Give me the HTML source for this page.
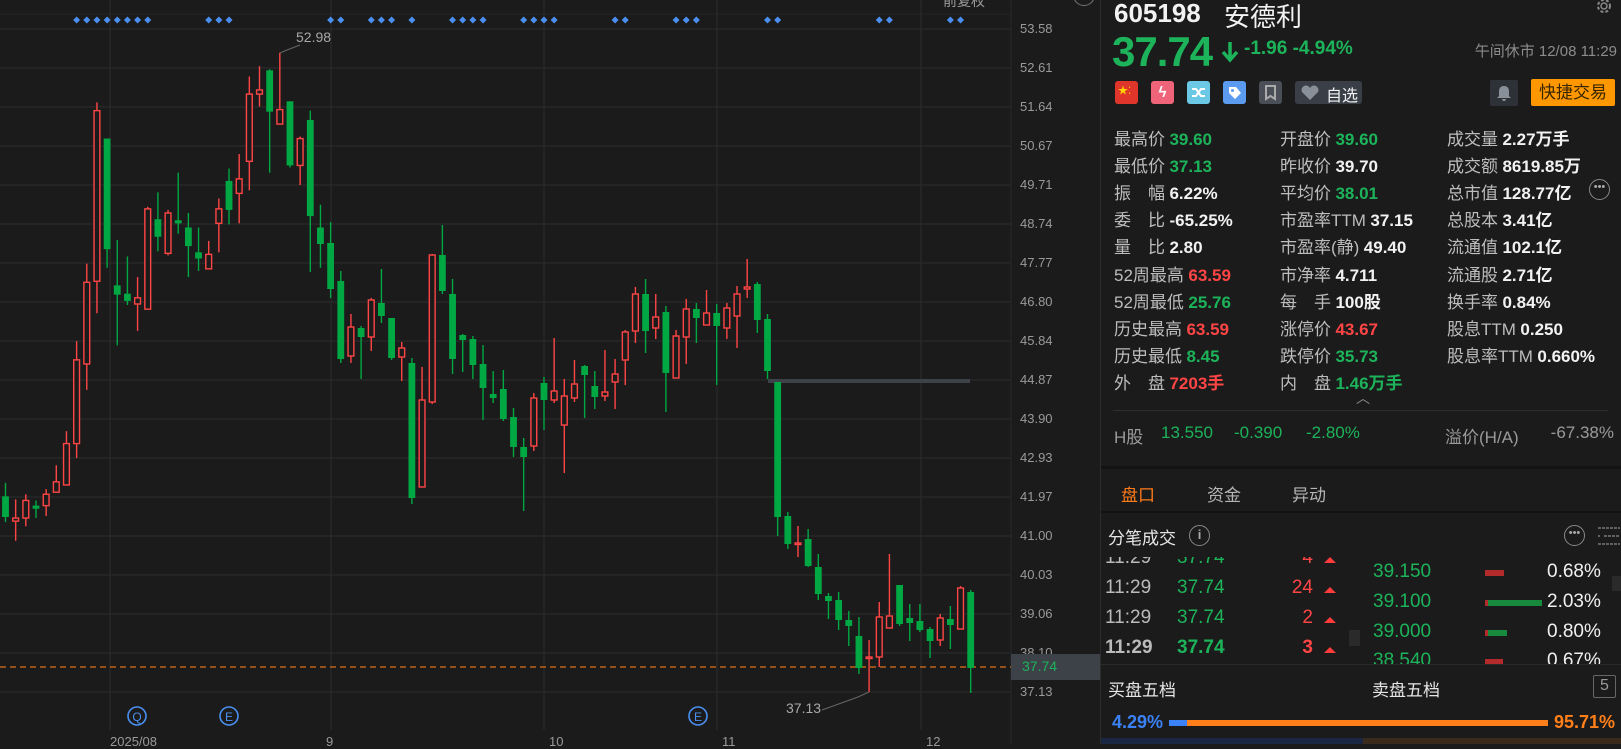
<!DOCTYPE html>
<html><head><meta charset="utf-8">
<style>
*{margin:0;padding:0;box-sizing:border-box}
body{width:1621px;height:744px;overflow:hidden;background:#1b1b1b;font-family:"Liberation Sans","Noto Sans CJK SC",sans-serif;color:#e8e8e8;position:relative}
.a{position:absolute;white-space:nowrap}
.g{color:#1db35a}.r{color:#ff4545}.w{color:#f2f2f2}
.lbl{color:#bdbdbd;font-size:17px}
.val{font-weight:bold;font-size:17px}
.ax{position:absolute;left:1020px;font-size:13px;color:#9a9a9a}
</style></head><body>
<svg id="ch" class="a" style="left:0;top:0" width="1101" height="744"></svg>

<div class="a" style="left:943px;top:-9px;font-size:14px;color:#9a9a9a">前复权</div>
<div class="a" style="left:296px;top:29px;font-size:14px;color:#a8a8a8">52.98</div>
<div class="a" style="left:786px;top:700px;font-size:14px;color:#a8a8a8">37.13</div>

<div id="axis"></div>
<div class="a" style="left:1011px;top:654px;width:90px;height:26px;background:#3d4249"></div>
<div class="a" style="left:1022px;top:658px;font-size:14px;color:#1db35a">37.74</div>

<div class="a" style="left:110px;top:734px;font-size:13px;color:#9a9a9a">2025/08</div>
<div class="a" style="left:326px;top:734px;font-size:13px;color:#9a9a9a">9</div>
<div class="a" style="left:549px;top:734px;font-size:13px;color:#9a9a9a">10</div>
<div class="a" style="left:722px;top:734px;font-size:13px;color:#9a9a9a">11</div>
<div class="a" style="left:926px;top:734px;font-size:13px;color:#9a9a9a">12</div>

<div class="a" style="left:1100px;top:0;width:1px;height:744px;background:#2c2c2c"></div>
<div class="a" style="left:1073px;top:-16px;width:22px;height:22px;border:1.5px solid #777;border-radius:50%"></div>
<div class="a" style="left:1114px;top:-2px;font-size:26px;font-weight:bold;color:#f2f2f2">605198</div>
<div class="a" style="left:1224px;top:-3px;font-size:26px;color:#f2f2f2">安德利</div>
<svg class="a" style="left:1594px;top:-4px" width="20" height="20" viewBox="0 0 20 20"><circle cx="10" cy="10" r="6" fill="none" stroke="#888" stroke-width="2" stroke-dasharray="3 2"/><circle cx="10" cy="10" r="3" fill="none" stroke="#888" stroke-width="1.5"/></svg>
<div class="a g" style="left:1112px;top:28px;font-size:42px;font-weight:bold;letter-spacing:-1px">37.74</div>
<svg class="a" style="left:1220px;top:41px" width="20" height="22"><path d="M10 1v16M3 11l7 8 7-8" stroke="#1db35a" stroke-width="3.5" fill="none"/></svg>
<div class="a g" style="left:1244px;top:38px;font-size:19px;font-weight:bold">-1.96 -4.94%</div>
<div class="a" style="right:4px;top:40px;font-size:15px;color:#8c8c8c">午间休市 12/08 11:29</div>

<div class="a" style="left:1115px;top:81px;width:23px;height:23px;background:#e0352b;border-radius:3px;color:#ffd400;font-size:10px;line-height:22px;padding-left:3px">★⁚</div>
<div class="a" style="left:1151px;top:81px;width:23px;height:23px;background:#f0647a;border-radius:3px;color:#fff;font-size:15px;line-height:23px;text-align:center;font-weight:bold">ϟ</div>
<svg class="a" style="left:1187px;top:81px" width="23" height="23"><rect width="23" height="23" rx="3" fill="#6cc9e6"/><path d="M5 8h4l5 7h4M5 15h4l5-7h4" stroke="#fff" stroke-width="2" fill="none"/></svg>
<svg class="a" style="left:1223px;top:81px" width="23" height="23"><rect width="23" height="23" rx="3" fill="#5b9bf0"/><path d="M6 6h7l5 6-6 6-6-6z" fill="#fff"/><circle cx="9.5" cy="9.5" r="1.5" fill="#5b9bf0"/></svg>
<svg class="a" style="left:1259px;top:81px" width="23" height="23"><rect width="23" height="23" rx="3" fill="#4a4f57"/><path d="M7 5h9v13l-4.5-3-4.5 3z" fill="none" stroke="#aaa" stroke-width="2"/></svg>
<div class="a" style="left:1295px;top:81px;width:67px;height:23px;background:#3a3f47;border-radius:3px"></div>
<svg class="a" style="left:1300px;top:85px" width="20" height="16"><path d="M10 15L2 7a4 4 0 0 1 8-4 4 4 0 0 1 8 4z" fill="#8a9099"/></svg>
<div class="a" style="left:1326px;top:82px;font-size:16px;color:#f0f0f0">自选</div>
<div class="a" style="left:1490px;top:80px;width:28px;height:26px;background:#2e3238;border-radius:2px"></div>
<svg class="a" style="left:1496px;top:84px" width="16" height="18"><path d="M8 2c-3 0-5 2-5 5v5l-2 2h14l-2-2V7c0-3-2-5-5-5zM6 15a2 2 0 0 0 4 0z" fill="#8a9099"/></svg>
<div class="a" style="left:1531px;top:79px;width:84px;height:27px;background:#ff9800;border-radius:2px;color:#3a2600;font-size:17px;line-height:27px;text-align:center">快捷交易</div>

<div id="stats"></div>
<div class="a" style="left:1356px;top:388px;color:#888;font-size:14px">︿</div>
<div class="a" style="left:1113px;top:410px;width:495px;height:1px;background:#2e2e2e"></div>
<div class="a" style="left:1114px;top:423px;font-size:17px;color:#9a9a9a">H股</div>
<div class="a g" style="left:1161px;top:423px;font-size:17px">13.550</div>
<div class="a g" style="left:1234px;top:423px;font-size:17px">-0.390</div>
<div class="a g" style="left:1306px;top:423px;font-size:17px">-2.80%</div>
<div class="a" style="left:1445px;top:423px;font-size:17px;color:#9a9a9a">溢价(H/A)</div>
<div class="a" style="right:7px;top:423px;font-size:17px;color:#9a9a9a">-67.38%</div>

<div class="a" style="left:1101px;top:466px;width:520px;height:3px;background:#131313"></div>
<div class="a" style="left:1121px;top:481px;font-size:17px;color:#ff7a1a">盘口</div>
<div class="a" style="left:1207px;top:481px;font-size:17px;color:#b5b5b5">资金</div>
<div class="a" style="left:1292px;top:481px;font-size:17px;color:#b5b5b5">异动</div>
<div class="a" style="left:1101px;top:511px;width:520px;height:2px;background:#131313"></div>
<div class="a" style="left:1108px;top:524px;font-size:17px;color:#e6e6e6">分笔成交</div>
<div class="a" style="left:1189px;top:525px;width:21px;height:21px;border:1.5px solid #888;border-radius:50%;color:#aaa;font-size:13px;text-align:center;line-height:18px;font-weight:bold">i</div>
<div class="a" style="left:1564px;top:525px;width:21px;height:21px;border:1.5px solid #888;border-radius:50%;color:#aaa;font-size:11px;text-align:center;line-height:14px">•••</div>
<svg class="a" style="left:1597px;top:525px" width="24" height="22"><path d="M1 3h22M7 11h16M1 19h22M1 11h2" stroke="#777" stroke-width="1.5" stroke-dasharray="3 1"/></svg>

<div class="a" style="left:1101px;top:557px;width:520px;height:107px;overflow:hidden">
 <div class="a" style="left:4px;top:-10px;font-size:19px;color:#bbb">11:29</div><div class="a g" style="left:76px;top:-10px;font-size:19px">37.74</div><div class="a r" style="right:308px;top:-10px;font-size:19px">4</div>
 <div class="a" style="left:4px;top:20px;font-size:19px;color:#bbb">11:29</div><div class="a g" style="left:76px;top:20px;font-size:19px">37.74</div><div class="a r" style="right:308px;top:20px;font-size:19px">24</div>
 <div class="a" style="left:4px;top:50px;font-size:19px;color:#bbb">11:29</div><div class="a g" style="left:76px;top:50px;font-size:19px">37.74</div><div class="a r" style="right:308px;top:50px;font-size:19px">2</div>
 <div class="a" style="left:4px;top:80px;font-size:19px;color:#bbb;font-weight:bold">11:29</div><div class="a g" style="left:76px;top:80px;font-size:19px;font-weight:bold">37.74</div><div class="a r" style="right:308px;top:80px;font-size:19px;font-weight:bold">3</div>
 <svg class="a" style="left:222px;top:0" width="14" height="107"><path d="M1 6h12L7 0zM1 36h12L7 30zM1 66h12L7 60zM1 96h12L7 90z" fill="#ff3b3b"/></svg>
 <div class="a" style="left:248px;top:73px;width:11px;height:16px;background:#2a2a2a"></div>
 <div class="a g" style="left:272px;top:4px;font-size:19px">39.150</div>
 <div class="a g" style="left:272px;top:34px;font-size:19px">39.100</div>
 <div class="a g" style="left:272px;top:64px;font-size:19px">39.000</div>
 <div class="a g" style="left:272px;top:93px;font-size:19px">38.540</div>
 <div class="a" style="left:384px;top:13px;width:19px;height:6px;background:#b22a2a"></div>
 <div class="a" style="left:384px;top:43px;width:57px;height:6px;background:#178a3e"></div><div class="a" style="left:384px;top:43px;width:3px;height:6px;background:#b22a2a"></div>
 <div class="a" style="left:384px;top:73px;width:22px;height:6px;background:#178a3e"></div><div class="a" style="left:384px;top:73px;width:3px;height:6px;background:#b22a2a"></div>
 <div class="a" style="left:384px;top:102px;width:18px;height:6px;background:#b22a2a"></div>
 <div class="a" style="left:446px;top:4px;font-size:19px;color:#f0f0f0">0.68%</div>
 <div class="a" style="left:446px;top:34px;font-size:19px;color:#f0f0f0">2.03%</div>
 <div class="a" style="left:446px;top:64px;font-size:19px;color:#f0f0f0">0.80%</div>
 <div class="a" style="left:446px;top:93px;font-size:19px;color:#f0f0f0">0.67%</div>
 <div class="a" style="left:511px;top:19px;width:9px;height:15px;background:#2a2a2a"></div>
</div>
<div class="a" style="left:1101px;top:664px;width:520px;height:1px;background:#2a2a2a"></div>
<div class="a" style="left:1108px;top:676px;font-size:17px;color:#e6e6e6">买盘五档</div>
<div class="a" style="left:1372px;top:676px;font-size:17px;color:#e6e6e6">卖盘五档</div>
<div class="a" style="left:1593px;top:675px;width:23px;height:23px;border:1.5px solid #666;border-radius:2px;color:#999;font-size:16px;text-align:center;line-height:20px">5</div>
<div class="a" style="left:1112px;top:712px;font-size:18px;font-weight:bold;color:#3b82f6">4.29%</div>
<div class="a" style="left:1169px;top:720px;width:18px;height:6px;background:#3b82f6"></div>
<div class="a" style="left:1187px;top:720px;width:361px;height:6px;background:#ff7f1a"></div>
<div class="a" style="left:1554px;top:712px;font-size:18px;font-weight:bold;color:#ff7f1a">95.71%</div>
<div class="a" style="left:1101px;top:738px;width:262px;height:6px;background:#1b2742"></div>
<div class="a" style="left:1363px;top:738px;width:258px;height:6px;background:#3a2a1c"></div>

<script>
var G='#00a843',R='#ff4545';
var s=[];
function add(h){s.push(h)}
var hy=[];for(var k=0;k<18;k++)hy.push(29+k*39);
add('<rect width="1011" height="730" fill="#1b1b1b"/>');
add('<line x1="0" y1="14" x2="1011" y2="14" stroke="#262626"/>');
hy.forEach(function(y){add('<line x1="0" y1="'+y+'" x2="1011" y2="'+y+'" stroke="#2a2a2a" stroke-width="1.3"/>')});
[110,331,544,717,921].forEach(function(x){add('<line x1="'+x+'" y1="0" x2="'+x+'" y2="730" stroke="#2a2a2a" stroke-width="1.3"/>')});
add('<line x1="1011" y1="0" x2="1011" y2="744" stroke="#2a2a2a"/>');
var A=[['G',480,500,467,505],['R',501,504,483,523],['R',484,501,478,509],['G',489,492,484,501],['R',478,489,473,499],['R',466,476,450,476],['R',429,469,417,469],['R',348,429,330,443],['R',273,352,255,377],['R',107,272,99,303],['G',134,241,134,259],['G',276,285,232,334],['G',284,291,248,295],['R',288,294,268,320],['R',202,299,200,299],['G',212,229,186,243],['R',206,245,203,247],['G',213,216,167,226],['G',220,238,206,268],['G',244,250,220,262],['R',246,260,233,257],['R',202,216,192,244],['G',175,203,163,217],['R',173,187,149,216],['R',91,156,74,184],['R',87,91,64,103],['G',68,108,67,167],['R',106,120,51,120],['G',98,160,98,162],['R',134,160,132,179],['G',116,209,107,263],['G',220,236,198,259]];
A=A.map(function(c){return [c[0],c[1]*1.034,c[2]*1.034,c[3]*1.034,c[4]*1.034]});
var B=[['G',243,289,222,298],['G',281,359,271,363],['R',327,356,314,363],['G',328,337,326,379],['R',300,337,298,351],['G',303,316,269,323],['G',318,358,318,360],['R',348,357,342,381],['G',363,498,358,504],['R',400,487,367,487],['R',255,402,254,404],['G',255,291,225,294],['G',294,359,279,374],['G',335,340,334,372],['G',339,365,336,379],['G',364,388,345,420],['G',394,398,371,403],['G',389,419,370,421],['G',417,447,408,457],['G',447,457,438,511],['R',398,446,393,451],['G',383,400,377,430],['R',391,400,338,403],['R',396,425,379,473],['R',384,398,360,402],['G',366,375,365,418],['G',386,397,371,409],['R',392,396,350,401],['R',374,382,359,409],['R',332,360,330,385],['R',294,331,287,343],['G',294,331,279,353],
['R',317,328,294,339],['G',312,373,306,412],['R',336,378,330,378],['R',309,337,299,364],['G',309,318,303,343],['R',313,325,290,325],['G',313,326,304,385],['R',308,328,303,339],['R',294,316,286,348],['R',287,289,259,298],['G',284,320,282,333],['G',319,371,314,379],['G',382,517,382,536],['G',516,544,512,549],['R',543,544,526,557],['G',539,566,529,567],['G',567,594,554,600],['G',596,601,593,619],['G',600,620,592,630],['G',620,626,611,646],['G',636,668,617,674],['R',657,658,640,692],['R',617,657,602,667],['R',616,628,554,628],['G',585,624,585,626],['G',618,623,604,641],['G',621,630,604,632],['G',629,641,627,658],['R',618,640,614,646],['G',619,625,606,649],['R',588,629,586,629],['G',592,668,590,693]];
var C=A.concat(B);
add('<rect x="768" y="379" width="202" height="4" fill="#3d4249"/>');
add('<line x1="0" y1="667" x2="1011" y2="667" stroke="#e0701a" stroke-width="1.3" stroke-dasharray="6 4"/>');
C.forEach(function(c,i){
 var x=5.5+i*10.16,col=c[0]=='G'?G:R;
 add('<line x1="'+x+'" y1="'+c[3]+'" x2="'+x+'" y2="'+c[4]+'" stroke="'+col+'" stroke-width="1.4"/>');
 var h=Math.max(c[2]-c[1],1.5);
 if(c[0]=='G')add('<rect x="'+(x-3.4)+'" y="'+c[1]+'" width="6.8" height="'+h+'" fill="'+G+'"/>');
 else add('<rect x="'+(x-2.9)+'" y="'+c[1]+'" width="5.8" height="'+h+'" fill="#1b1b1b" stroke="'+R+'" stroke-width="1.4"/>');
});
[7,8,9,10,11,12,13,14,20,21,22,32,33,36,37,38,40,44,45,46,47,51,52,53,54,60,61,66,67,68,75,76,86,87,93,94].forEach(function(i){
 var x=5.5+i*10.16;add('<path d="M'+x+' 16.5l3.5 3.5-3.5 3.5-3.5-3.5z" fill="#4a8ff0"/>')});
add('<path d="M280 53L287 50 L300 45" stroke="#666" fill="none"/>');
add('<path d="M869 692L858 697 L822 710" stroke="#666" fill="none"/>');
[[137,'Q'],[229,'E'],[698,'E']].forEach(function(m){add('<circle cx="'+m[0]+'" cy="716" r="9" fill="none" stroke="#4a8ff0" stroke-width="1.6"/><text x="'+m[0]+'" y="721" font-size="12" fill="#4a8ff0" text-anchor="middle" font-family="Liberation Sans">'+m[1]+'</text>')});
document.getElementById('ch').innerHTML=s.join('');
var L=['53.58','52.61','51.64','50.67','49.71','48.74','47.77','46.80','45.84','44.87','43.90','42.93','41.97','41.00','40.03','39.06','38.10','37.13'],ax='';
L.forEach(function(t,k){ax+='<div class="ax" style="top:'+(29+k*39-8)+'px">'+t+'</div>'});
document.getElementById('axis').innerHTML=ax;
var rows=[[['最高价','39.60','g'],['开盘价','39.60','g'],['成交量','2.27万手','w']],[['最低价','37.13','g'],['昨收价','39.70','w'],['成交额','8619.85万','w']],[['振　幅','6.22%','w'],['平均价','38.01','g'],['总市值','128.77亿','w']],[['委　比','-65.25%','w'],['市盈率TTM','37.15','w'],['总股本','3.41亿','w']],[['量　比','2.80','w'],['市盈率(静)','49.40','w'],['流通值','102.1亿','w']],[['52周最高','63.59','r'],['市净率','4.711','w'],['流通股','2.71亿','w']],[['52周最低','25.76','g'],['每　手','100股','w'],['换手率','0.84%','w']],[['历史最高','63.59','r'],['涨停价','43.67','r'],['股息TTM','0.250','w']],[['历史最低','8.45','g'],['跌停价','35.73','g'],['股息率TTM','0.660%','w']],[['外　盘','7203手','r'],['内　盘','1.46万手','g']]];
var xs=[1114,1280,1447],st='';
rows.forEach(function(r,ri){var y=125+ri*27.1;r.forEach(function(c,ci){st+='<div class="a" style="left:'+xs[ci]+'px;top:'+y+'px"><span class="lbl">'+c[0]+'</span> <span class="val '+c[2]+'">'+c[1]+'</span></div>'})});
st+='<div class="a" style="left:1589px;top:179px;width:21px;height:21px;border:1.5px solid #888;border-radius:50%;color:#aaa;font-size:11px;text-align:center;line-height:14px">•••</div>';
document.getElementById('stats').innerHTML=st;
</script>
</body></html>
